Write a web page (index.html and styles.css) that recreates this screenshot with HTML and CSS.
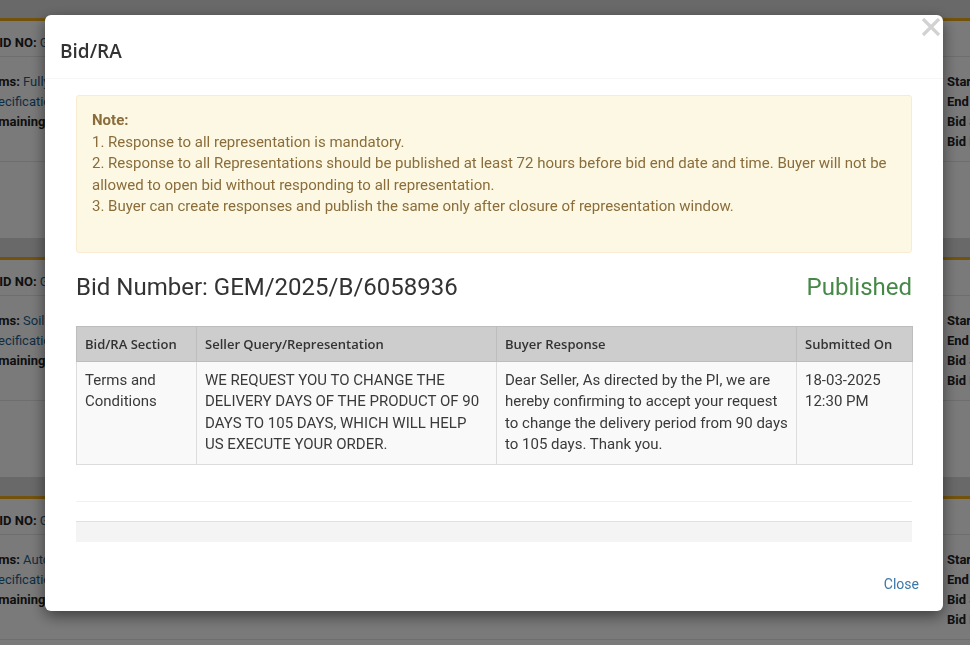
FILE: index.html
```html
<!DOCTYPE html>
<html>
<head>
<meta charset="utf-8">
<title>Bid/RA</title>
<link rel="stylesheet" href="styles.css">
</head>
<body>
<div class="page">
  <div class="card">
    <div class="card-head"><b>BID NO:</b> <span class="link">GEM/2025/B/6058936</span></div>
    <div class="card-body">
      <div class="col-left">
        <div><b>Items:</b> <span class="link">Fully Automatic Analyzer</span></div>
        <div class="link">Specification</div>
        <div><b>Remaining</b></div>
      </div>
      <div class="col-right">
        <div><b>Start Date:</b></div>
        <div><b>End Date:</b></div>
        <div><b>Bid Status:</b></div>
        <div><b>Bid Details:</b></div>
      </div>
    </div>
  </div>
  <div class="card">
    <div class="card-head"><b>BID NO:</b> <span class="link">GEM/2025/B/6058936</span></div>
    <div class="card-body">
      <div class="col-left">
        <div><b>Items:</b> <span class="link">Soil Testing Kit</span></div>
        <div class="link">Specification</div>
        <div><b>Remaining</b></div>
      </div>
      <div class="col-right">
        <div><b>Start Date:</b></div>
        <div><b>End Date:</b></div>
        <div><b>Bid Status:</b></div>
        <div><b>Bid Details:</b></div>
      </div>
    </div>
  </div>
  <div class="card">
    <div class="card-head"><b>BID NO:</b> <span class="link">GEM/2025/B/6058936</span></div>
    <div class="card-body">
      <div class="col-left">
        <div><b>Items:</b> <span class="link">Automatic Analyzer</span></div>
        <div class="link">Specification</div>
        <div><b>Remaining</b></div>
      </div>
      <div class="col-right">
        <div><b>Start Date:</b></div>
        <div><b>End Date:</b></div>
        <div><b>Bid Status:</b></div>
        <div><b>Bid Details:</b></div>
      </div>
    </div>
  </div>
</div>

<div class="overlay"></div>

<div class="modal">
  <svg class="close-x" width="22" height="22" viewBox="0 0 22 22" aria-label="close">
    <path d="M3 3 L19 19 M19 3 L3 19" stroke="#d2d2d2" stroke-width="3.2" stroke-linecap="butt" fill="none"/>
  </svg>
  <div class="modal-header">
    <h4 class="modal-title">Bid/RA</h4>
  </div>
  <div class="modal-body">
    <div class="note">
      <div class="note-title">Note:</div>
      <div>1. Response to all representation is mandatory.</div>
      <div>2. Response to all Representations should be published at least 72 hours before bid end date and time. Buyer will not be allowed to open bid without responding to all representation.</div>
      <div>3. Buyer can create responses and publish the same only after closure of representation window.</div>
    </div>
    <div class="bid-row">
      <span class="bid-number">Bid Number: GEM/2025/B/6058936</span>
      <span class="status">Published</span>
    </div>
    <table class="rep-table">
      <colgroup>
        <col class="c1"><col class="c2"><col class="c3"><col class="c4">
      </colgroup>
      <thead>
        <tr>
          <th>Bid/RA Section</th>
          <th>Seller Query/Representation</th>
          <th>Buyer Response</th>
          <th>Submitted On</th>
        </tr>
      </thead>
      <tbody>
        <tr>
          <td>Terms and Conditions</td>
          <td>WE REQUEST YOU TO CHANGE THE DELIVERY DAYS OF THE PRODUCT OF 90 DAYS TO 105 DAYS, WHICH WILL HELP US EXECUTE YOUR ORDER.</td>
          <td>Dear Seller, As directed by the PI, we are hereby confirming to accept your request to change the delivery period from 90 days to 105 days. Thank you.</td>
          <td>18-03-2025 12:30 PM</td>
        </tr>
      </tbody>
    </table>
    <div class="rule"></div>
    <div class="gray-bar"></div>
  </div>
  <div class="modal-footer">
    <a class="close-link" href="#">Close</a>
  </div>
</div>
</body>
</html>
```

FILE: styles.css
```css
* { box-sizing: border-box; }

html, body {
  margin: 0;
  padding: 0;
  height: 100%;
  overflow: hidden;
}

body {
  background: #dcdcdc;
  font-family: Roboto, "Liberation Sans", Arial, sans-serif;
  color: #333;
}

/* background page */
.page {
  padding-top: 18px;
}

.card {
  background: #fff;
  border-top: 3px solid #f0ad1a;
  height: 220px;
  margin-bottom: 19px;
  font-size: 13px;
  line-height: 20px;
}

.card-head {
  height: 36px;
  border-bottom: 1px solid #e6e6e6;
  padding: 12px 0 0;
  margin-left: -9px;
  color: #222;
  white-space: nowrap;
}

.card-body {
  display: flex;
  justify-content: space-between;
  border-bottom: 1px solid #e6e6e6;
  padding: 15px 0 9px;
  margin-left: -17px;
}

.col-left div,
.col-right div {
  white-space: nowrap;
  color: #222;
}

.col-right {
  width: 23px;
  overflow: hidden;
}

.link,
.col-left .link {
  color: #1f5f8b;
}

/* overlay */
.overlay {
  position: fixed;
  inset: 0;
  background: rgba(0, 0, 0, 0.52);
}

/* modal */
.modal {
  position: fixed;
  left: 45px;
  top: 15px;
  width: 898px;
  background: #fff;
  border-radius: 6px;
  box-shadow: 0 5px 15px rgba(0, 0, 0, 0.5);
}

.close-x {
  position: absolute;
  right: 1px;
  top: 1px;
}

.modal-header {
  padding: 21px 15px 12px;
  border-bottom: 1px solid #f6f6f6;
}

.modal-title {
  margin: 0;
  font-family: "Open Sans", "Liberation Sans", sans-serif;
  font-weight: 600;
  font-size: 19px;
  line-height: 30px;
  color: #333;
}

.modal-body {
  padding: 16px 31px 0;
}

.note {
  background: #fcf8e3;
  border: 1px solid #f7ecd2;
  border-radius: 3px;
  color: #8a6d3b;
  font-size: 15px;
  line-height: 21.5px;
  padding: 14px 15px 34px;
}

.note-title {
  font-weight: 700;
}

.bid-row {
  display: flex;
  justify-content: space-between;
  align-items: center;
  margin: 21px 0 26px;
  line-height: 26px;
  font-size: 24px;
}

.bid-number {
  color: #333;
}

.status {
  color: #468847;
}

.rep-table {
  width: 100%;
  border-collapse: collapse;
  table-layout: fixed;
  font-size: 15px;
  line-height: 21.5px;
}

.c1 { width: 120px; }
.c2 { width: 300px; }
.c3 { width: 300px; }
.c4 { width: 116px; }

.rep-table th {
  background: #cdcdcd;
  font-family: "Open Sans", "Liberation Sans", sans-serif;
  font-weight: 600;
  font-size: 13px;
  line-height: 18px;
  text-align: left;
  color: #333;
  padding: 8px 8px;
  border: 1px solid #bdbdbd;
  white-space: nowrap;
}

.rep-table td {
  background: #f9f9f9;
  vertical-align: top;
  padding: 8px 8px 8px;
  border: 1px solid #dcdcdc;
  color: #3a3a3a;
}

.rule {
  margin-top: 36px;
  height: 1px;
  background: #f1f1f1;
}

.gray-bar {
  margin-top: 19px;
  height: 21px;
  background: #f4f4f4;
  border-top: 1px solid #e0e0e0;
}

.modal-footer {
  padding: 32px 24px 17px;
  text-align: right;
  line-height: 20px;
}

.close-link {
  color: #3a78a8;
  text-decoration: none;
  font-size: 14px;
}
```
